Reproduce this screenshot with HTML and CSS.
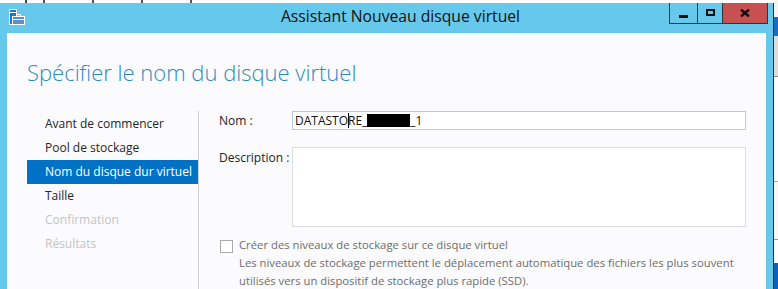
FILE: index.html
```html
<!DOCTYPE html>
<html lang="fr">
  <head>
    <meta charset="UTF-8" />
    <title>Assistant Nouveau disque virtuel</title>
    <link rel="stylesheet" href="styles.css">
  </head>
  <body>
    <div class="screen">
      <div class="main-col">
        <div class="behind-top" aria-hidden="true"></div>
        <div class="window">
          <div class="titlebar">
            <svg class="app-icon" width="17" height="17" viewBox="0 0 17 17" aria-hidden="true">
              <rect x="0.5" y="0.5" width="7" height="15" fill="#1d78cf" stroke="#fff" />
              <rect x="1" y="3" width="6" height="1" fill="#fff" />
              <path d="M7.5 7.5 V5.5 H11.5 V7.5" fill="none" stroke="#fff" />
              <rect x="3.5" y="7.5" width="12" height="8" fill="#5a90c2" stroke="#fff" />
              <rect x="4" y="10" width="11" height="1" fill="#fff" />
            </svg>
            <div class="title">Assistant Nouveau disque virtuel</div>
            <div class="controls">
              <div class="ctrl min"><span></span></div>
              <div class="ctrl max"><span></span></div>
              <div class="ctrl close">
                <svg width="10" height="8" viewBox="0 0 10 8" aria-hidden="true">
                  <path d="M1 0.5 L9 7.5 M9 0.5 L1 7.5" stroke="#111" stroke-width="2.4" />
                </svg>
              </div>
            </div>
          </div>
          <div class="client">
            <h1>Spécifier le nom du disque virtuel</h1>
            <div class="wizard">
              <ul class="steps">
                <li>Avant de commencer</li>
                <li>Pool de stockage</li>
                <li class="current">Nom du disque dur virtuel</li>
                <li>Taille</li>
                <li class="off">Confirmation</li>
                <li class="off">Résultats</li>
              </ul>
              <div class="form">
                <div class="field">
                  <label>Nom :</label>
                  <div class="name-input">DATASTO<i class="caret"></i>RE_<b class="redact"></b>_1</div>
                </div>
                <div class="field desc">
                  <label>Description :</label>
                  <div class="desc-box"></div>
                </div>
                <div class="opt">
                  <span class="check"></span>
                  <div class="opt-text">
                    Créer des niveaux de stockage sur ce disque virtuel<br />
                    Les niveaux de stockage permettent le déplacement automatique des fichiers les plus souvent<br />
                    utilisés vers un dispositif de stockage plus rapide (SSD).
                  </div>
                </div>
              </div>
            </div>
          </div>
        </div>
      </div>
      <div class="behind-right" aria-hidden="true">
        <div class="b1"></div>
        <div class="b2"></div>
        <div class="b3"></div>
        <div class="b4"></div>
        <div class="b5"></div>
        <div class="b6"></div>
        <div class="b7"></div>
      </div>
    </div>
  </body>
</html>
```

FILE: styles.css
```css
* {
  box-sizing: border-box;
}
body {
  margin: 0;
  font-family: "Open Sans", sans-serif;
  font-size: 12px;
  background: #fff;
  overflow: hidden;
}

.screen {
  display: flex;
  height: 289px;
  overflow: hidden;
}
.main-col {
  width: 774px;
  display: flex;
  flex-direction: column;
}
/* bits of the window behind, peeking above the title bar */
.behind-top {
  flex: none;
  height: 3px;
  background:
    linear-gradient(90deg, transparent 25px, #444 25px, #444 27px, transparent 27px),
    repeating-linear-gradient(90deg, #fff 0, #fff 43px, #555 43px, #555 45px, #fff 45px, #fff 49px) 0 0 / 220px 100% no-repeat,
    #fff;
}

.window {
  flex: 1;
  min-height: 0;
  display: flex;
  flex-direction: column;
  background: #66c8ea;
  border-right: 1px solid #2b2b2b;
}
.titlebar {
  flex: none;
  height: 30px;
  display: flex;
  align-items: flex-start;
}
.app-icon {
  margin: 6px 0 0 9px;
}
.title {
  flex: 1;
  margin-top: 3px;
  padding-left: 106px;
  text-align: center;
  font-size: 15.7px;
  line-height: 20px;
  color: #111;
}
.controls {
  display: flex;
  height: 21px;
  margin-right: 5px;
  border: 1px solid #333;
  border-top: none;
}
.ctrl {
  display: flex;
  align-items: center;
  justify-content: center;
  height: 20px;
}
.ctrl + .ctrl {
  border-left: 1px solid #333;
}
.min {
  width: 27px;
}
.min span {
  width: 9px;
  height: 3px;
  margin-top: 6px;
  background: #111;
}
.max {
  width: 25px;
}
.max span {
  width: 9px;
  height: 7px;
  margin-top: -1px;
  border: 2px solid #111;
}
.close {
  width: 45px;
  background: #c75050;
}

.client {
  flex: 1;
  margin: 0 7px;
  display: flex;
  flex-direction: column;
  background: #fbfbfd;
}
.client h1 {
  flex: none;
  margin: 0;
  padding: 23px 0 23px 20px;
  font-size: 22px;
  font-weight: 300;
  line-height: 32px;
  color: #2b8bbf;
}

.wizard {
  flex: 1;
  display: flex;
}
.steps {
  width: 172px;
  margin: 0 0 0 20px;
  padding: 1px 0 0;
  list-style: none;
  border-right: 1px solid #d2d2d2;
}
.steps li {
  height: 24px;
  padding-left: 18px;
  line-height: 24px;
  color: #262626;
}
.steps li.current {
  background: #0072c6;
  color: #fff;
}
.steps li.off {
  color: #c4c4c4;
}

.form {
  flex: 1;
  padding: 0 20px;
}
.field {
  display: flex;
}
.field label {
  width: 73px;
  line-height: 19px;
  color: #1e1e1e;
}
.name-input {
  flex: 1;
  height: 19px;
  padding-left: 2px;
  border: 1px solid #b4c8e8;
  background: #fff;
  line-height: 17px;
  color: #111;
  white-space: nowrap;
}
.caret {
  display: inline-block;
  width: 1px;
  height: 15px;
  margin-right: -1px;
  vertical-align: -3px;
  background: #000;
}
.redact {
  display: inline-block;
  width: 43px;
  height: 13px;
  vertical-align: -2px;
  background: #000;
}
.desc {
  margin-top: 17px;
}
.desc label {
  margin-top: 1px;
}
.desc-box {
  flex: 1;
  height: 80px;
  border: 1px solid #dcdcdc;
  background: #fff;
}

.opt {
  display: flex;
  margin-top: 9px;
  padding-left: 1px;
}
.check {
  flex: none;
  width: 13px;
  height: 13px;
  margin-top: 4px;
  border: 1px solid #a9a9a9;
  background: #fff;
}
.opt-text {
  margin-left: 6px;
  font-size: 11.3px;
  line-height: 18px;
  color: #6d6d6d;
  white-space: nowrap;
}

.behind-right {
  width: 4px;
  display: flex;
  flex-direction: column;
}
.b1 {
  height: 17px;
  background: #f4f4f4;
}
.b2 {
  height: 19px;
  background: #1a6cc0;
}
.b3 {
  height: 41px;
  background: #dcdcdc;
  border-bottom: 1px solid #8a8a8a;
}
.b4 {
  height: 105px;
  background: #fff;
  border-bottom: 1px solid #aaa;
}
.b5 {
  height: 58px;
  background: #f8f8f8;
  border-bottom: 1px solid #999;
}
.b6 {
  height: 23px;
  background: #fff;
}
.b7 {
  flex: 1;
  background: #0a64b4;
}
```
